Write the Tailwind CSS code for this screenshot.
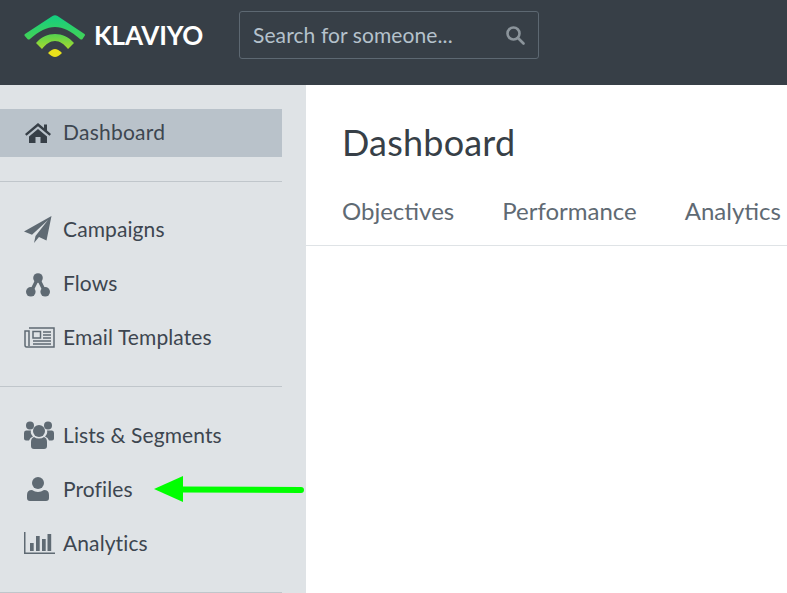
<!DOCTYPE html>
<html lang="en">
<head>
    <meta charset="UTF-8">
    <title>Dashboard</title>
    <script src="https://cdn.jsdelivr.net/npm/@tailwindcss/browser@4"></script>
</head>
<body class="font-['Lato',sans-serif] w-[787px] h-[593px] overflow-hidden relative bg-white">
    <header class="h-[85px] bg-[#373f47] flex items-center">
        <div class="w-[239px] h-full flex items-center shrink-0">
            <svg class="ml-[24px] shrink-0 mb-[13px]" width="62" height="43" viewBox="0 0 62 43">
                <defs>
                    <linearGradient id="top" x1="0" y1="0" x2="0" y2="1">
                        <stop offset="0" stop-color="#12cf82"/>
                        <stop offset="1" stop-color="#45d255"/>
                    </linearGradient>
                    <linearGradient id="mid" x1="0" y1="0" x2="0" y2="1">
                        <stop offset="0" stop-color="#53d24f"/>
                        <stop offset="1" stop-color="#a8d92f"/>
                    </linearGradient>
                </defs>
                <path d="M28.500 1Q31-.5 33.500 1L60.500 19Q61.500 20 60.500 21L58.500 24Q57.500 25 56 24C47 16 39 12 31 12C23 12 15 16 6 24Q4.500 25 3.500 24L.8 21Q0 20 1 19Z" fill="url(#top)"/>
                <path d="M12 28C17 22 24 19 31 19C38 19 45 22 50 28L44 34C40 29 36 26 31 26C26 26 22 29 18 34Z" fill="url(#mid)"/>
                <path d="M24 38Q28 34 31 34Q34 34 38 38Q34 42 31 42Q28 42 24 38Z" fill="#e9e01b"/>
            </svg>
            <span class="ml-[8px] mb-[15px] text-white text-[26px] leading-none font-bold tracking-[-0.2px]">KLAVIYO</span>
        </div>
        <div class="w-[300px] h-[48px] mb-[15px] border border-[#5d6872] rounded-[3px] flex items-center justify-between pl-[13px] pr-[13px]">
            <span class="text-[21px] tracking-[0.1px] text-[#b5c2cc]">Search for someone...</span>
            <svg width="20" height="20" viewBox="0 0 20 20" fill="none" stroke="#8b949b" stroke-width="2.6">
                <circle cx="8.500" cy="8.500" r="6"/>
                <path d="M13 13l5.500 5.500" stroke-linecap="round"/>
            </svg>
        </div>
    </header>

    <div class="flex h-[508px]">
        <aside class="w-[306px] bg-[#dfe3e6] shrink-0 pt-[24px] text-[21px] tracking-[0.1px] text-[#3d4650]">
            <div class="w-[282px]">
                <div class="h-[48px] bg-[#b9c2ca] flex items-center">
                    <span class="w-[63px] flex justify-center pl-[13px]">
                        <svg width="26" height="20" viewBox="0 0 26 20" fill="#373f47"><path d="M13 0L0 11l1.500 1.800L13 3.200l11.500 9.600L26 11l-4-3.400V1.500h-3v3.600zM4 13.500V20h6.500v-6h5v6H22v-6.500l-9-7.500z"/></svg>
                    </span>
                    <span class="mb-[2px] tracking-[0.25px]">Dashboard</span>
                </div>
                <div class="mt-[24px] border-t border-[#c0c6cb] pt-[20px] pb-[22px]">
                    <div class="h-[54px] flex items-center">
                        <span class="w-[63px] flex justify-center pl-[12px]">
                            <svg width="28" height="27" viewBox="0 0 28 27" fill="#5f6a73"><path d="M27.500 0L0 15.500l8 3.200L24 4 11.500 20 10 27l5-6 7.500 3.500z"/></svg>
                        </span>
                        <span class="mb-[1px]">Campaigns</span>
                    </div>
                    <div class="h-[54px] flex items-center">
                        <span class="w-[63px] flex justify-center pl-[13px] mt-[3px]">
                            <svg width="24" height="24" viewBox="0 0 24 24" fill="#5f6a73">
                                <path d="M12 5L5 19M12 5l7 14" stroke="#5f6a73" stroke-width="3.500" fill="none"/>
                                <circle cx="12" cy="5" r="4.800"/>
                                <circle cx="4.800" cy="18.800" r="4.800"/>
                                <circle cx="19.200" cy="18.800" r="4.800"/>
                            </svg>
                        </span>
                        <span class="mb-[1px]">Flows</span>
                    </div>
                    <div class="h-[54px] flex items-center">
                        <span class="w-[63px] flex justify-center pl-[15px]">
                            <svg width="31" height="21" viewBox="0 0 31 21" fill="none" stroke="#5f6a73" stroke-width="1.500">
                                <path d="M5 1h25v19H2.500Q1 20 1 18V4h4v15"/>
                                <rect x="9" y="4.500" width="7.500" height="6.500"/>
                                <path d="M19 5h8M19 8h8M19 11h8M9 14h18M9 17h18"/>
                            </svg>
                        </span>
                        <span class="mb-[1px]">Email Templates</span>
                    </div>
                </div>
                <div class="border-t border-[#c0c6cb] pt-[21px] pb-[22px]">
                    <div class="h-[54px] flex items-center">
                        <span class="w-[63px] flex justify-center pl-[15px]">
                            <svg width="30" height="28" viewBox="0 0 30 28" fill="#5f6a73">
                                <circle cx="6" cy="4.500" r="4"/>
                                <circle cx="24" cy="4.500" r="4"/>
                                <path d="M0 12q0-2.500 2-2.500h5q-1 3 2 6-3 1-4 4H2q-2 0-2-2zM30 12q0-2.500-2-2.500h-5q1 3-2 6 3 1 4 4h3q2 0 2-2z"/>
                                <circle cx="15" cy="10" r="6"/>
                                <path d="M7 21q0-4 3-5 2 1.500 5 1.500t5-1.500q3 1 3 5v4q0 3-3 3H10q-3 0-3-3z"/>
                            </svg>
                        </span>
                        <span class="mb-[1px]">Lists &amp; Segments</span>
                    </div>
                    <div class="h-[54px] flex items-center">
                        <span class="w-[63px] flex justify-center pl-[13px]">
                            <svg width="22" height="24" viewBox="0 0 22 24" fill="#5f6a73">
                                <circle cx="11" cy="6" r="6"/>
                                <path d="M0 18q0-5 5-5 3 2 6 2t6-2q5 0 5 5v3q0 3-3 3H3q-3 0-3-3z"/>
                            </svg>
                        </span>
                        <span class="mb-[1px]">Profiles</span>
                    </div>
                    <div class="h-[54px] flex items-center">
                        <span class="w-[63px] flex justify-center pl-[15px]">
                            <svg width="31" height="22" viewBox="0 0 31 22" fill="#5f6a73">
                                <path d="M0 0h1.500v20.500H31V22H0z"/>
                                <rect x="6" y="11" width="3.700" height="8"/>
                                <rect x="12" y="4" width="3.700" height="15"/>
                                <rect x="18" y="7" width="3.700" height="12"/>
                                <rect x="23.500" y="2" width="3.700" height="17"/>
                            </svg>
                        </span>
                        <span class="mb-[1px]">Analytics</span>
                    </div>
                </div>
                <div class="border-t border-[#c0c6cb]"></div>
            </div>
        </aside>
        <main class="flex-1 min-w-0 overflow-hidden">
            <div class="border-b border-[#dfe3e6] h-[161px] pl-[36px]">
                <h1 class="pt-[34px] text-[36px] tracking-[0.2px] leading-[46px] text-[#373f47]">Dashboard</h1>
                <nav class="mt-[30px] flex gap-[48px] text-[24px] leading-[32px] text-[#5f6a73] whitespace-nowrap">
                    <span>Objectives</span>
                    <span>Performance</span>
                    <span>Analytics</span>
                </nav>
            </div>
        </main>
    </div>

    <svg class="absolute left-[150px] top-[474px]" width="156" height="30" viewBox="0 0 156 30">
        <path d="M33 15.500L151 16" stroke="#00ff00" stroke-width="6" stroke-linecap="round"/>
        <path d="M4 15L33 2v26z" fill="#00ff00"/>
    </svg>
</body>
</html>
